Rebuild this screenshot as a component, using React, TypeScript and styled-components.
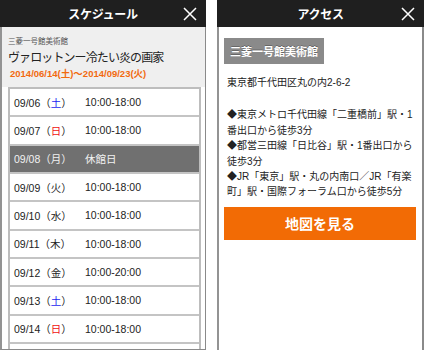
import React from "react";
import styled, { createGlobalStyle } from "styled-components";

const GlobalStyle = createGlobalStyle`
  html, body { margin: 0; padding: 0; background: #fff; }
  body { font-family: "Liberation Sans", "Noto Sans CJK JP", sans-serif; }
  * { box-sizing: border-box; }
`;

const JP = `"Liberation Sans", "Noto Sans CJK JP", sans-serif`;

const Page = styled.div`
  display: flex;
  gap: 11px;
  width: 424px;
  height: 350px;
  overflow: hidden;
  background: #fff;
`;

const Panel = styled.div<{ $w: number }>`
  width: ${(p) => p.$w}px;
  height: 350px;
  display: flex;
  flex-direction: column;
  overflow: hidden;
`;

const Header = styled.div`
  height: 27px;
  flex: none;
  background: #1f1f1f;
  display: grid;
  grid-template-columns: 1fr auto 1fr;
  align-items: center;
  color: #fff;
`;

const HeaderTitle = styled.div`
  grid-column: 2;
  font-family: ${JP};
  font-weight: bold;
  font-size: 12px;
  letter-spacing: -0.3px;
`;

const CloseBtn = styled.div`
  grid-column: 3;
  justify-self: end;
  margin-right: 9px;
  display: flex;
`;

const Body = styled.div<{ $bottom?: boolean; $rb: number }>`
  flex: 1;
  min-height: 0;
  overflow: hidden;
  background: #fff;
  border-left: 2px solid #939393;
  border-right: ${(p) => p.$rb}px solid #8a8a8a;
  border-bottom: ${(p) => (p.$bottom ? "1px solid #8a8a8a" : "none")};
`;

const Info = styled.div`
  height: 60px;
  background: #efefef;
  padding: 10px 6px 0;
  display: flex;
  flex-direction: column;
`;

const Museum = styled.div`
  font-family: ${JP};
  font-size: 7.5px;
  color: #555;
  line-height: 10px;
`;

const Title = styled.div`
  font-family: ${JP};
  font-size: 12px;
  letter-spacing: -0.9px;
  color: #222;
  line-height: 20px;
  margin-top: 1px;
`;

const Period = styled.div`
  font-family: ${JP};
  font-size: 9.5px;
  font-weight: bold;
  color: #f26a10;
  line-height: 12px;
  padding-left: 2px;
`;

const Table = styled.div`
  margin: 0 4px 0 6px;
  border: 2px solid #bdbdbd;
  border-bottom: none;
`;

const Row = styled.div<{ $closed?: boolean }>`
  height: 28.33px;
  display: grid;
  grid-template-columns: 71px 1fr;
  align-items: center;
  padding-left: 4px;
  font-family: ${JP};
  font-size: 10.5px;
  color: ${(p) => (p.$closed ? "#f2f2f2" : "#222")};
  background: ${(p) => (p.$closed ? "#707070" : "#fff")};
  border-bottom: 2px solid #c4c4c4;
`;

const Day = styled.span<{ $c?: string }>`
  color: ${(p) => p.$c ?? "inherit"};
`;

const AccessBody = styled.div`
  padding: 11px 6px 0 5px;
`;

const NameTag = styled.div`
  width: 100px;
  height: 26px;
  background: #8a8a8a;
  color: #fff;
  font-family: ${JP};
  font-weight: bold;
  font-size: 11px;
  display: flex;
  align-items: center;
  justify-content: center;
  text-shadow: 0 -1px 0 rgba(0, 0, 0, 0.25);
`;

const Text = styled.div<{ $mt: number }>`
  font-family: ${JP};
  font-size: 10px;
  line-height: 15.4px;
  color: #222;
  padding: 0 3px;
  margin-top: ${(p) => p.$mt}px;
  white-space: nowrap;
`;

const MapButton = styled.div`
  margin-top: 7px;
  height: 33px;
  background: #f26b05;
  color: #fff;
  font-family: ${JP};
  font-weight: bold;
  font-size: 14px;
  display: flex;
  align-items: center;
  justify-content: center;
`;

const CloseIcon = () => (
  <svg width="14" height="14" viewBox="0 0 14 14">
    <path d="M1 1L13 13M13 1L1 13" stroke="#fff" strokeWidth="1.5" fill="none" />
  </svg>
);

type Sched = { d: string; w: string; c?: string; t: string; closed?: boolean };

const rows: Sched[] = [
  { d: "09/06", w: "土", c: "#1d1df0", t: "10:00-18:00" },
  { d: "09/07", w: "日", c: "#f01010", t: "10:00-18:00" },
  { d: "09/08", w: "月", t: "休館日", closed: true },
  { d: "09/09", w: "火", t: "10:00-18:00" },
  { d: "09/10", w: "水", t: "10:00-18:00" },
  { d: "09/11", w: "木", t: "10:00-18:00" },
  { d: "09/12", w: "金", t: "10:00-20:00" },
  { d: "09/13", w: "土", c: "#1d1df0", t: "10:00-18:00" },
  { d: "09/14", w: "日", c: "#f01010", t: "10:00-18:00" },
];

export default function App() {
  return (
    <>
      <GlobalStyle />
      <Page>
        <Panel $w={206}>
          <Header>
            <HeaderTitle>スケジュール</HeaderTitle>
            <CloseBtn>
              <CloseIcon />
            </CloseBtn>
          </Header>
          <Body $bottom $rb={1}>
            <Info>
              <Museum>三菱一号館美術館</Museum>
              <Title>ヴァロットンー冷たい炎の画家</Title>
              <Period>2014/06/14(土)〜2014/09/23(火)</Period>
            </Info>
            <Table>
              {rows.map((r) => (
                <Row key={r.d} $closed={r.closed}>
                  <span>
                    {r.d}（<Day $c={r.c}>{r.w}</Day>）
                  </span>
                  <span>{r.t}</span>
                </Row>
              ))}
              <Row />
            </Table>
          </Body>
        </Panel>
        <Panel $w={207}>
          <Header>
            <HeaderTitle>アクセス</HeaderTitle>
            <CloseBtn>
              <CloseIcon />
            </CloseBtn>
          </Header>
          <Body $rb={2}>
            <AccessBody>
              <NameTag>三菱一号館美術館</NameTag>
              <Text $mt={11}>東京都千代田区丸の内2-6-2</Text>
              <Text $mt={17}>
                ◆東京メトロ千代田線「二重橋前」駅・1
                <br />
                番出口から徒歩3分
                <br />
                ◆都営三田線「日比谷」駅・1番出口から
                <br />
                徒歩3分
                <br />
                ◆JR「東京」駅・丸の内南口／JR「有楽
                <br />
                町」駅・国際フォーラム口から徒歩5分
              </Text>
              <MapButton>地図を見る</MapButton>
            </AccessBody>
          </Body>
        </Panel>
      </Page>
    </>
  );
}
